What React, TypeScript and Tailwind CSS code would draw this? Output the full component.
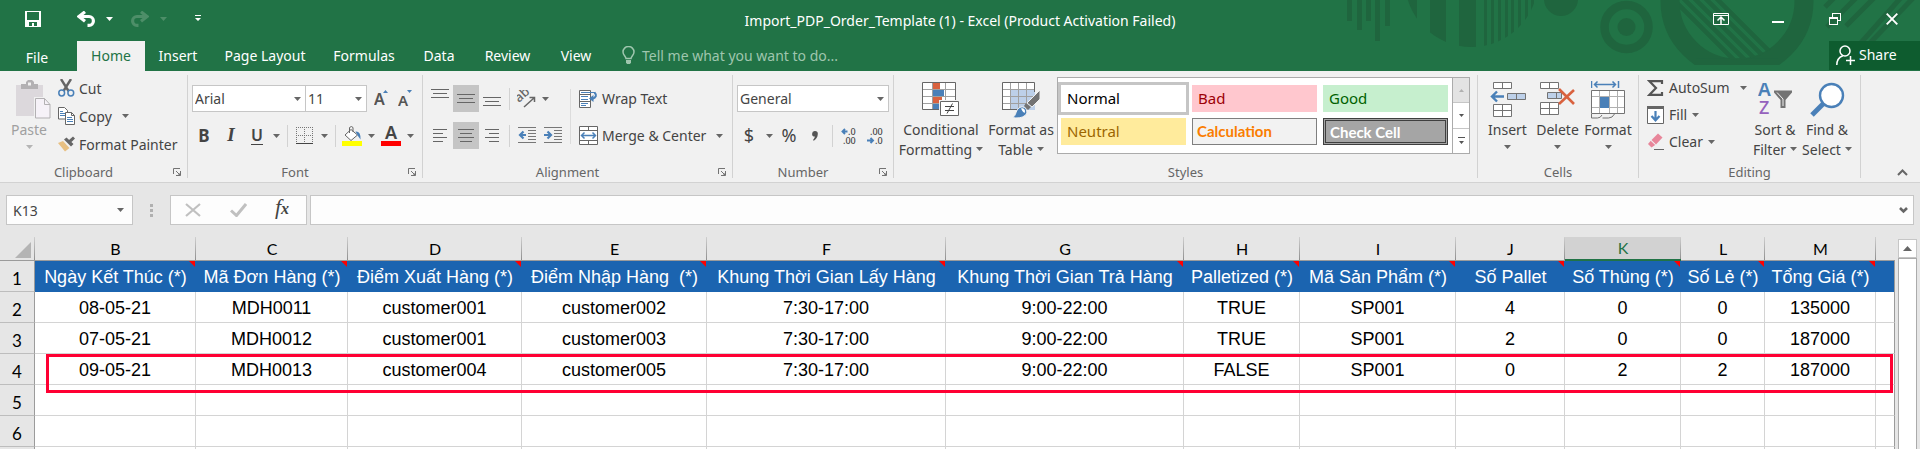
import React from "react";

const UI = "font-['Noto_Sans','Open_Sans',sans-serif]";
const SHEET = "font-['Liberation_Sans',Arial,sans-serif]";
const HEAD = "font-['Lato','Noto_Sans',sans-serif]";

const GRAY = "#737373";
const BLUE = "#4a80b8";

type IconProps = { w: number; h: number; children: React.ReactNode; crisp?: boolean };

function Icon({ w, h, children, crisp }: IconProps) {
  return (
    <svg
      width={w}
      height={h}
      viewBox={`0 0 ${w} ${h}`}
      fill="none"
      aria-hidden="true"
      className="block shrink-0"
      shapeRendering={crisp ? "crispEdges" : undefined}
    >
      {children}
    </svg>
  );
}

function Arrow({ color = "#666666" }: { color?: string }) {
  return (
    <Icon w={7} h={4}>
      <path d="M0 0h7L3.5 4z" fill={color} />
    </Icon>
  );
}

/* ---------- Title bar ---------- */

function Decoration() {
  const bars = [
    [7, 21],
    [17, 30],
    [26, 21],
    [35, 41],
    [45, 26],
  ];
  const stripes = [
    [60, 17],
    [90, 16],
    [119, 17],
    [144, 3],
    [151, 3],
    [158, 3],
    [165, 3],
    [171, 3],
    [178, 3],
    [185, 3],
    [191, 3],
  ];
  return (
    <svg width="580" height="71" viewBox="0 0 580 71" aria-hidden="true" className="pointer-events-none absolute top-0 right-0">
      <defs>
        <clipPath id="disc">
          <circle cx="131.5" cy="-19.5" r="66.5" />
        </clipPath>
        <clipPath id="inner">
          <circle cx="397" cy="2" r="58" />
        </clipPath>
        <clipPath id="base">
          <rect x="300" y="0" width="200" height="65" />
        </clipPath>
      </defs>
      <g fill="#1f653e">
        {bars.map(([x, h]) => (
          <rect key={x} x={x} y="0" width="5" height={h} />
        ))}
        <g clipPath="url(#disc)">
          {stripes.map(([x, w]) => (
            <rect key={x} x={x} y="0" width={w} height="50" />
          ))}
        </g>
        <circle cx="221" cy="-1" r="17" />
        <circle cx="286.5" cy="27" r="9" />
      </g>
      <g stroke="#1f653e" fill="none">
        <circle cx="286.5" cy="27" r="22" strokeWidth="8.5" />
        <g clipPath="url(#base)">
          <circle cx="397" cy="1" r="67" strokeWidth="19" />
          <path d="M356 62h82" strokeWidth="7" />
        </g>
        <g clipPath="url(#inner)" strokeWidth="4.5">
          <path d="M370 -8l80 80M359 -8l80 80M348 -8l80 80M337 -8l80 80M326 -8l80 80" />
        </g>
        <path d="M485 7l10-10M487 27l34-34" strokeWidth="5" />
        <path d="M506 26l32-32M519 45l46-52M528 45l50-52" strokeWidth="5" />
      </g>
    </svg>
  );
}

function QuickAccess() {
  return (
    <div className="flex items-center pb-1 pl-[25px]">
      <button type="button" aria-label="Save">
        <Icon w={16} h={16} crisp>
          <path fillRule="evenodd" d="M0 0h16v16H0zM2 1h12v8H2zM4 11h8v4H9v-3H7v3H4z" fill="#fff" />
        </Icon>
      </button>
      <button type="button" aria-label="Undo" className="ml-9 flex items-center gap-[11px]">
        <Icon w={18} h={16}>
          <path d="M8 .8L2 5.500l6 4.700M2.500 5.500H12a4.300 4.300 0 0 1 0 8.800H10.500" stroke="#fff" strokeWidth="3.200" />
        </Icon>
        <Arrow color="#fff" />
      </button>
      <button type="button" aria-label="Redo" className="ml-[18px] flex items-center gap-[11px]">
        <Icon w={18} h={16}>
          <path d="M10 .8l6 4.700-6 4.700M15.500 5.500H6a4.300 4.300 0 0 0 0 8.800H7.500" stroke="#4d8e68" strokeWidth="3.200" />
        </Icon>
        <Arrow color="#4d8e68" />
      </button>
      <button type="button" aria-label="Customize Quick Access Toolbar" className="ml-7">
        <Icon w={6} h={7}>
          <path d="M0 0h6v1H0zM0 3h6L3 6z" fill="#fff" />
        </Icon>
      </button>
    </div>
  );
}

function WindowControls() {
  const cls = "flex w-[57px] items-center justify-center";
  return (
    <div className="flex items-stretch justify-end pb-1">
      <button type="button" aria-label="Ribbon Display Options" className={cls}>
        <Icon w={16} h={12}>
          <path d="M.5 .5h15v11H.5zM0 2.500h16" stroke="#fff" />
          <path d="M8 11V5M4.500 7.500L8 4l3.500 3.500" stroke="#fff" strokeWidth="1.500" />
        </Icon>
      </button>
      <button type="button" aria-label="Minimize" className={`${cls} pt-1.5`}>
        <span className="h-0.5 w-3 bg-white" />
      </button>
      <button type="button" aria-label="Restore" className={cls}>
        <Icon w={12} h={12} crisp>
          <path d="M.5 4.500h8v7h-8zM3.500 4.500v-4h8v7h-3" stroke="#fff" />
          <path d="M0 5h9" stroke="#fff" />
        </Icon>
      </button>
      <button type="button" aria-label="Close" className={cls}>
        <Icon w={12} h={12}>
          <path d="M.7 .7l10.600 10.600M11.300 .7L.7 11.300" stroke="#fff" strokeWidth="1.900" />
        </Icon>
      </button>
    </div>
  );
}

const tabs: [string, string][] = [
  ["File", "w-[74px] pt-0.5"],
  ["Home", "ml-[3px] w-[68px] bg-[#f1f1f1] pb-0.5 text-[#217346]"],
  ["Insert", "w-[66px] pb-0.5"],
  ["Page Layout", "w-[108px] pb-0.5"],
  ["Formulas", "w-[90px] pb-0.5"],
  ["Data", "w-[60px] pb-0.5"],
  ["Review", "w-[77px] pb-0.5"],
  ["View", "w-[60px] pb-0.5"],
];

function TitleArea() {
  return (
    <header className="relative bg-[#217346] text-[14px] text-white">
      <Decoration />
      <div className="relative grid h-[41px] grid-cols-[1fr_auto_1fr]">
        <QuickAccess />
        <h1 className="self-center">Import_PDP_Order_Template (1) - Excel (Product Activation Failed)</h1>
        <WindowControls />
      </div>
      <div className="relative flex h-[30px]">
        <nav className="flex">
          {tabs.map(([name, look]) => (
            <button key={name} type="button" className={`${look} whitespace-nowrap`}>
              {name}
            </button>
          ))}
        </nav>
        <button type="button" className="ml-4 flex items-center gap-[7px] pb-0.5 text-[#9fc6ae]">
          <Icon w={13} h={18}>
            <path
              d="M4 12.500c0-2-3-3.300-3-6.500a5.500 5.500 0 0 1 11 0c0 3.200-3 4.500-3 6.500z"
              stroke="#9fc6ae"
              strokeWidth="1.500"
            />
            <path d="M4 14h5v2.500L8 18H5l-1-1.500z" fill="#9fc6ae" />
          </Icon>
          Tell me what you want to do...
        </button>
        <button type="button" className="mb-px ml-auto flex w-[91px] items-center gap-1 bg-[#0e5c2f] pb-0.5 pl-[7px]">
          <Icon w={19} h={20}>
            <circle cx="9" cy="6" r="5" stroke="#fff" strokeWidth="1.500" />
            <path d="M.8 20c0-5 2.500-8 6-9.300M14.500 11v9M10 15.500h9" stroke="#fff" strokeWidth="1.500" />
          </Icon>
          Share
        </button>
      </div>
    </header>
  );
}

/* ---------- Ribbon pieces ---------- */

function Launcher({ name }: { name: string }) {
  return (
    <button type="button" aria-label={`${name} settings`} className="mr-1.5">
      <Icon w={8} h={8}>
        <path d="M.5 6V.5H7" stroke={GRAY} />
        <path d="M3 3l3 3M7.500 3v4.500H3" stroke={GRAY} />
        <path d="M7.500 4.500v3h-3z" fill={GRAY} />
      </Icon>
    </button>
  );
}

function Group({
  label,
  width,
  launcher,
  children,
}: {
  label: string;
  width: string;
  launcher?: boolean;
  children: React.ReactNode;
}) {
  return (
    <section aria-label={label} className={`${width} flex flex-col border-r border-[#d2d2d2]`}>
      <div className="flex h-[91px]">{children}</div>
      <div className="flex h-3 items-center text-[13px] leading-3 text-[#666666]">
        <span className="flex-1 text-center">{label}</span>
        {launcher && <span className="w-1.5" />}
        {launcher && <Launcher name={label} />}
      </div>
    </section>
  );
}

function Big({
  icon,
  lines,
  width,
  muted,
}: {
  icon: React.ReactNode;
  lines: string[];
  width: string;
  muted?: boolean;
}) {
  const color = muted ? "#b5b5b5" : "#666666";
  return (
    <button
      type="button"
      className={`${width} flex shrink-0 flex-col items-center whitespace-nowrap text-[14px] leading-5 ${muted ? "text-[#a0a0a0]" : "text-[#444444]"}`}
    >
      <span className="flex h-[45px] items-center pt-1">{icon}</span>
      <span>{lines[0]}</span>
      <span className="flex h-5 items-center gap-1">
        {lines[1]}
        <span className={lines[1] ? "pb-0.5" : "pb-1.5"}>
          <Arrow color={color} />
        </span>
      </span>
    </button>
  );
}

function Sep() {
  return <span className="h-[22px] w-px shrink-0 bg-[#d2d2d2]" />;
}

function Tool({
  label,
  width,
  on,
  children,
}: {
  label: string;
  width: string;
  on?: boolean;
  children: React.ReactNode;
}) {
  return (
    <button
      type="button"
      aria-label={label}
      className={`${width} flex h-[27px] shrink-0 items-center justify-center ${on ? "bg-[#c5c5c5]" : ""}`}
    >
      {children}
    </button>
  );
}

function Picker({ label, value, width }: { label: string; value: string; width: string }) {
  return (
    <div className={`${width} relative h-[27px] border border-[#c6c6c6] bg-white text-[14px] text-[#444444]`}>
      <select aria-label={label} className="h-full w-full appearance-none bg-transparent pl-0.5 outline-none">
        <option>{value}</option>
      </select>
      <span className="pointer-events-none absolute top-[11px] right-1">
        <Arrow />
      </span>
    </div>
  );
}

function Lines({ rows, w, align }: { rows: number[]; w: number; align: "l" | "c" | "r" }) {
  return (
    <Icon w={w} h={rows.length * 4 - 3} crisp>
      {rows.map((r, i) => {
        const x = align === "l" ? 0 : align === "c" ? Math.floor((w - r) / 2) : w - r;
        return <rect key={i} x={x} y={i * 4} width={r} height="1" fill="#666666" />;
      })}
    </Icon>
  );
}

function Clipboard() {
  const row = "flex h-7 items-center gap-1 pb-0.5";
  return (
    <Group label="Clipboard" width="w-[188px]" launcher>
      <Big
        muted
        lines={["Paste", ""]}
        width="w-[58px]"
        icon={
          <span className="pl-2">
            <Icon w={35} h={39}>
              <path d="M0 5h27v31H0z" fill="#dcd8dc" />
              <path d="M5 4h5V2l2-2h4l2 2v2h4v5H5z" fill="#b3b1b3" />
              <path d="M12 2.500h3v3h-3z" fill="#f1f1f1" />
              <path d="M18 17h17v22H18z" fill="#f1f1f1" />
              <path d="M19.500 18.500h9l5.500 6v13.500H19.500z" fill="#f6f2f8" stroke="#b3b1b3" />
              <path d="M28.500 18.500v6H34" stroke="#b3b1b3" />
            </Icon>
          </span>
        }
      />
      <div className="flex flex-col text-[14px] text-[#444444]">
        <button type="button" className={row}>
          <Icon w={17} h={18}>
            <path d="M3 0l7.500 12M13 0L5.500 12" stroke="#666666" strokeWidth="2.400" />
            <circle cx="3.700" cy="14" r="2.900" stroke={BLUE} strokeWidth="1.500" />
            <circle cx="12.800" cy="14" r="2.900" stroke={BLUE} strokeWidth="1.500" />
          </Icon>
          Cut
        </button>
        <button type="button" className={row}>
          <Icon w={17} h={18}>
            <path d="M.5 .5h6l3 3v8.500h-9z" fill="#fff" stroke="#666666" />
            <path d="M2 4.500h3M2 6.500h5M2 8.500h5" stroke={BLUE} />
            <path d="M7.500 5.500h6l3 3v9h-9z" fill="#fff" stroke="#666666" />
            <path d="M13.500 5.500v3h3" stroke="#666666" />
            <path d="M9 10.500h5M9 12.500h6M9 14.500h6" stroke={BLUE} />
          </Icon>
          Copy
          <span className="pl-1.5">
            <Arrow />
          </span>
        </button>
        <button type="button" className={row}>
          <Icon w={17} h={17}>
            <path d="M0 7l5-2 6.500 7L7 15.500z" fill="#e8c082" />
            <path d="M6 3.500l2.500-2 7 6.500-2.500 2.500zM11 4l4-3.500 2 2L13.500 6z" fill="#666666" />
          </Icon>
          Format Painter
        </button>
      </div>
    </Group>
  );
}

function FontGroup() {
  return (
    <Group label="Font" width="w-[235px]" launcher>
      <div className="flex flex-col gap-2.5 pt-2.5 pl-1">
        <div className="flex">
          <Picker label="Font" value="Arial" width="w-[114px]" />
          <Picker label="Font size" value="11" width="w-[61px] border-l-0" />
          <Tool label="Increase Font Size" width="w-[28px]">
            <Icon w={15} h={17}>
              <text x="0" y="15" fontSize="16" fontWeight="600" fill="#555555">
                A
              </text>
              <path d="M9 3l2.500-3L14 3z" fill={BLUE} />
            </Icon>
          </Tool>
          <Tool label="Decrease Font Size" width="w-[20px]">
            <Icon w={15} h={17}>
              <text x="0" y="16" fontSize="15" fontWeight="600" fill="#555555">
                A
              </text>
              <path d="M9 0h5l-2.500 3z" fill={BLUE} />
            </Icon>
          </Tool>
        </div>
        <div className="flex items-center text-[17px] text-[#444444]">
          <Tool label="Bold" width="w-[24px]">
            <b>B</b>
          </Tool>
          <Tool label="Italic" width="w-[30px]">
            <b className="font-['Liberation_Serif',serif] text-[19px] italic">I</b>
          </Tool>
          <Tool label="Underline" width="w-[22px]">
            <span className="border-b border-[#444444] text-[16px] leading-[17px] font-semibold">U</span>
          </Tool>
          <Tool label="Underline options" width="w-[16px]">
            <Arrow />
          </Tool>
          <span className="w-[3px]" />
          <Sep />
          <Tool label="Borders" width="w-[33px]">
            <Icon w={17} h={17} crisp>
              <path d="M0 .5h17M0 8.500h17M.5 0v17M8.500 0v17M16.500 0v17" stroke="#777777" strokeDasharray="1 1" />
              <path d="M0 16.500h17" stroke="#444444" />
            </Icon>
          </Tool>
          <Tool label="Border options" width="w-[6px]">
            <Arrow />
          </Tool>
          <span className="w-[8px]" />
          <Sep />
          <Tool label="Fill Color" width="w-[32px]">
            <Icon w={20} h={20}>
              <path d="M9 3.500l6.500 5.500-6.500 5.500L3 9z" fill="#fff" stroke="#666666" />
              <path d="M7.500 7V1.500Q9.500-.5 11 1.500V6" stroke="#666666" />
              <path d="M13.500 5.500Q19 5 18.500 13.500L16 10z" fill={BLUE} />
              <rect y="15" width="20" height="5" fill="#ffff00" />
            </Icon>
          </Tool>
          <Tool label="Fill options" width="w-[7px]">
            <Arrow />
          </Tool>
          <Tool label="Font Color" width="w-[32px]">
            <Icon w={20} h={20}>
              <text x="4" y="13" fontSize="18" fontWeight="600" fill="#444444">
                A
              </text>
              <rect y="15" width="20" height="5" fill="#ff0000" />
            </Icon>
          </Tool>
          <Tool label="Font color options" width="w-[7px]">
            <Arrow />
          </Tool>
        </div>
      </div>
    </Group>
  );
}

function Indent({ out }: { out?: boolean }) {
  return (
    <Icon w={18} h={17}>
      <path d="M0 .5h18M10 3.500h8M10 6.500h8M10 9.500h8M10 12.500h8M0 15.500h18" stroke="#777777" />
      {out ? (
        <path d="M8 8H2.500M5.500 4.500L2 8l3.500 3.500" stroke={BLUE} strokeWidth="2.200" />
      ) : (
        <path d="M0 8h6M3.500 4.500L7 8l-3.500 3.500" stroke={BLUE} strokeWidth="2.200" />
      )}
    </Icon>
  );
}

function AlignmentGroup() {
  const btn = "flex h-[27px] items-center gap-1 whitespace-nowrap";
  return (
    <Group label="Alignment" width="w-[310px]" launcher>
      <div className="flex flex-col gap-2.5 pt-2.5 pl-1">
        <div className="flex items-center">
          <Tool label="Top Align" width="w-[26px] pb-2.5">
            <Lines w={18} rows={[18, 14, 18]} align="c" />
          </Tool>
          <Tool label="Middle Align" width="w-[26px]" on>
            <Lines w={18} rows={[18, 14, 18]} align="c" />
          </Tool>
          <Tool label="Bottom Align" width="w-[26px] pt-1.5">
            <Lines w={18} rows={[18, 14, 18]} align="c" />
          </Tool>
          <span className="w-1" />
          <Sep />
          <Tool label="Orientation" width="w-[32px]">
            <Icon w={19} h={18}>
              <text x="0" y="10" fontSize="13" fontWeight="500" fill="#666666" transform="rotate(-42 5 9)">
                ab
              </text>
              <path d="M7 17L17 8M12.500 7.500H17.500V12" stroke="#666666" strokeWidth="1.500" />
            </Icon>
          </Tool>
          <Tool label="Orientation options" width="w-[6px]">
            <Arrow />
          </Tool>
        </div>
        <div className="flex items-center">
          <Tool label="Align Left" width="w-[26px]">
            <Lines w={14} rows={[14, 10, 14, 10]} align="l" />
          </Tool>
          <Tool label="Center" width="w-[26px]" on>
            <Lines w={16} rows={[16, 12, 16, 12]} align="c" />
          </Tool>
          <Tool label="Align Right" width="w-[26px]">
            <Lines w={14} rows={[14, 10, 14, 10]} align="r" />
          </Tool>
          <span className="w-1" />
          <Sep />
          <Tool label="Decrease Indent" width="w-[34px]">
            <Indent out />
          </Tool>
          <Tool label="Increase Indent" width="w-[18px]">
            <Indent />
          </Tool>
        </div>
      </div>
      <div className="mt-3.5 ml-2 h-[55px] w-px bg-[#dcdcdc]" />
      <div className="flex flex-col gap-2.5 pt-2.5 pl-2 text-[14px] text-[#444444]">
        <button type="button" className={btn}>
          <Icon w={19} h={18}>
            <path d="M.5 .5h11v17H.5zM0 4.500h12M0 11.500h12" fill="#fff" stroke="#666666" />
            <path d="M2 2.500h14M2 6.500h7M2 9.500h7M2 13.500h7M2 15.500h5" stroke={BLUE} />
            <path d="M15.500 2.500Q19.500 6.500 13 9" stroke={BLUE} strokeWidth="2" />
            <path d="M14.500 5v7L10 8.500z" fill={BLUE} />
          </Icon>
          Wrap Text
        </button>
        <button type="button" className={btn}>
          <Icon w={19} h={19}>
            <path d="M.5 .5h18v18H.5zM0 4.500h19M0 14.500h19M9.500 0v4.500M9.500 14.500V19" fill="#fff" stroke="#666666" />
            <path d="M3 9.500h13M5.500 6.500l-3 3 3 3M13.500 6.500l3 3-3 3" stroke={BLUE} strokeWidth="1.500" />
          </Icon>
          Merge &amp; Center
          <span className="pl-1.5">
            <Arrow />
          </span>
        </button>
      </div>
    </Group>
  );
}

function Decimal({ up }: { up?: boolean }) {
  return (
    <Icon w={18} h={18}>
      <text x={up ? 7 : 3} y="8" fontSize="9" fontWeight="500" fill="#444444">
        {up ? ".0" : ".00"}
      </text>
      <text x={up ? 2 : 8} y="17" fontSize="9" fontWeight="500" fill="#444444">
        {up ? ".00" : ".0"}
      </text>
      {up ? (
        <path d="M6.500 4.500H1.500M4 2L1.500 4.500 4 7" stroke={BLUE} strokeWidth="1.900" />
      ) : (
        <path d="M0 13.500h5.500M3.500 11L6 13.500 3.500 16" stroke={BLUE} strokeWidth="1.900" />
      )}
    </Icon>
  );
}

function NumberGroup() {
  return (
    <Group label="Number" width="w-[161px]" launcher>
      <div className="flex flex-col gap-2.5 pt-2.5 pl-1">
        <Picker label="Number Format" value="General" width="w-[152px]" />
        <div className="flex items-center text-[18px] text-[#444444]">
          <Tool label="Accounting Number Format" width="w-[24px]">
            $
          </Tool>
          <Tool label="Currency options" width="w-[16px]">
            <Arrow />
          </Tool>
          <Tool label="Percent Style" width="w-[24px]">
            %
          </Tool>
          <Tool label="Comma Style" width="w-[28px]">
            <Icon w={6} h={10}>
              <path d="M3 0a2.800 2.800 0 0 1 2.800 3c0 3.200-1.800 5.200-4 6.700l-.8-.8C2.300 7.600 2.800 6.600 2.800 5.600a2.800 2.800 0 0 1 .2-5.600z" fill="#555555" />
            </Icon>
          </Tool>
          <span className="w-[3px]" />
          <Sep />
          <Tool label="Increase Decimal" width="w-[34px]">
            <Decimal up />
          </Tool>
          <Tool label="Decrease Decimal" width="w-[18px]">
            <Decimal />
          </Tool>
        </div>
      </div>
    </Group>
  );
}

function StylesGroup() {
  const cell = "h-[27px] px-1.5 text-left text-[15px] whitespace-nowrap";
  return (
    <Group label="Styles" width="min-w-0 flex-1">
      <Big
        lines={["Conditional", "Formatting"]}
        width="ml-1 w-[86px]"
        icon={
          <Icon w={38} h={36}>
            <path d="M.5 .5h33v27H.5z" fill="#fff" />
            <path d="M11 1h7v6h-7zM11 15h9v6h-9z" fill="#d9623f" />
            <path d="M11 8h11v6H11zM11 22h6v5h-6z" fill={BLUE} />
            <path d="M0 7.500h34M0 14.500h34M0 21.500h34M10.500 0v28M23.500 0v28" stroke="#a0a0a0" />
            <path d="M.5 .5h33v27H.5z" stroke="#666666" />
            <path d="M17 18h21v18H17z" fill="#f1f1f1" />
            <path d="M18.500 19.500h18v14h-18z" fill="#fff" stroke="#666666" />
            <path d="M23 24.500h9M23 28.500h9M30.500 21.500l-5.500 10" stroke="#444444" />
          </Icon>
        }
      />
      <Big
        lines={["Format as", "Table"]}
        width="ml-1 w-[66px]"
        icon={
          <Icon w={38} h={36}>
            <path d="M.5 .5h32v27H.5z" fill="#fff" />
            <path d="M9 8h24v20H9z" fill="#bdd0e9" />
            <path d="M0 7.500h33M0 14.500h33M0 21.500h33M8.500 0v28M16.500 0v28M24.500 0v28" stroke="#a0a0a0" />
            <path d="M.5 28V.5h32V10M0 27.500h16" stroke="#666666" />
            <path d="M38 8v9l-8 8-5-4z" fill={GRAY} stroke="#f1f1f1" />
            <path d="M24 21l5 4-3 3-4-4z" fill={GRAY} />
            <path d="M10 35.500c5-1 3-9 9-10.500 5-1 8 5 4 8.500-3 2.500-8 3-13 2z" fill={BLUE} stroke="#f1f1f1" />
            <path d="M19 26.500c3-1 5 2 3.500 4.500-2-1-2.500-3-3.500-4.500z" fill="#fff" />
          </Icon>
        }
      />
      <div className="mt-0.5 mr-[7px] ml-[3px] flex h-[77px] min-w-0 flex-1 border border-[#ababab] bg-white">
        <div className="grid flex-1 grid-cols-3 content-start gap-x-1.5 gap-y-1.5 py-[7px] pr-1 pl-[3px]">
          <button type="button" className={`${cell} bg-white text-black outline-3 outline-[#c5c5c5]`}>
            Normal
          </button>
          <button type="button" className={`${cell} bg-[#ffc7ce] text-[#9c0006]`}>
            Bad
          </button>
          <button type="button" className={`${cell} bg-[#c6efce] text-[#006100]`}>
            Good
          </button>
          <button type="button" className={`${cell} bg-[#ffeb9c] text-[#9c6500]`}>
            Neutral
          </button>
          <button type="button" className={`${cell} border border-[#7f7f7f] bg-[#f2f2f2] pl-1 ${HEAD} font-bold text-[#fa7d00]`}>
            Calculation
          </button>
          <button
            type="button"
            className={`${cell} border-3 border-double border-[#3f3f3f] bg-[#a5a5a5] pl-1 leading-5 ${HEAD} font-bold text-white`}
          >
            Check Cell
          </button>
        </div>
        <div className="flex w-[17px] flex-col border-l border-[#ababab]">
          <button type="button" aria-label="Previous styles" className="flex flex-1 items-center justify-center bg-[#e3e3e3]">
            <Icon w={5} h={3}>
              <path d="M0 3h5L2.500 0z" fill="#b0b0b0" />
            </Icon>
          </button>
          <button type="button" aria-label="Next styles" className="flex flex-1 items-center justify-center border-y border-[#c6c6c6]">
            <Icon w={5} h={3}>
              <path d="M0 0h5L2.500 3z" fill="#555555" />
            </Icon>
          </button>
          <button type="button" aria-label="More styles" className="flex flex-1 items-center justify-center">
            <Icon w={7} h={7}>
              <path d="M0 0h7v1H0zM1 4h5L3.500 7z" fill="#555555" />
            </Icon>
          </button>
        </div>
      </div>
    </Group>
  );
}

function CellsGroup() {
  return (
    <Group label="Cells" width="w-[161px]">
      <Big
        lines={["Insert", ""]}
        width="ml-1 w-[51px]"
        icon={
          <Icon w={36} h={36}>
            <path d="M3.500 .5h18v6h-18zM12.500 .5v6M3.500 22.500h18v12h-18zM3.500 28.500h18M12.500 22.500v12" fill="#fff" stroke={GRAY} />
            <path d="M17.500 11.500h18v6h-18zM26.500 11.500v6" fill="#bdd0e9" stroke={GRAY} />
            <path d="M14 14.500H2M7 9.500l-5 5 5 5" stroke={BLUE} strokeWidth="2.400" />
          </Icon>
        }
      />
      <Big
        lines={["Delete", ""]}
        width="w-[49px]"
        icon={
          <Icon w={35} h={36}>
            <path d="M.5 .5h18v6H.5zM9.500 .5v6M.5 20.500h18v12H.5zM.5 26.500h18M9.500 20.500v12" fill="#fff" stroke={GRAY} />
            <path d="M7.500 10.500h14v6h-14zM16.500 10.500v6" fill="#bdd0e9" stroke={GRAY} />
            <path d="M19 7l15 15M34 8L19 22" stroke="#d9623f" strokeWidth="2.600" />
          </Icon>
        }
      />
      <Big
        lines={["Format", ""]}
        width="w-[52px]"
        icon={
          <Icon w={34} h={38}>
            <path d="M.5 0v7M27.500 0v7M3 3.500h22M6.500 .5l-3 3 3 3M21.500 .5l3 3-3 3" stroke={BLUE} strokeWidth="1.500" />
            <path d="M.5 9.500h33v23H.5z" fill="#fff" />
            <path d="M8.500 9v24M18.500 9v24M26.500 9v24M0 15.500h34M0 26.500h34" stroke="#b0b0b0" />
            <path d="M.5 9.500h33v23H.5z" stroke={GRAY} />
            <path d="M9 16h9v11H9z" fill={BLUE} />
            <path d="M.5 33v4h6q3 0 4.500-3M11.500 37h6q4 0 6-4" stroke={GRAY} />
          </Icon>
        }
      />
    </Group>
  );
}

function EditingGroup() {
  const row = "flex h-[27px] items-center gap-[5px] pb-0.5";
  return (
    <Group label="Editing" width="w-[222px]">
      <div className="flex w-[108px] flex-col pl-2 text-[14px] text-[#444444]">
        <button type="button" className={row}>
          <Icon w={17} h={16}>
            <path d="M15 4V1.200H2.500L9 8l-6.500 6.800H15V12" stroke="#555555" strokeWidth="2.200" />
          </Icon>
          AutoSum
          <span className="pl-[5px]">
            <Arrow />
          </span>
        </button>
        <button type="button" className={row}>
          <Icon w={17} h={18}>
            <path d="M.5 .5h16v17H.5z" fill="#fff" stroke="#666666" />
            <path d="M0 0h17v3H0z" fill="#666666" />
            <path d="M8.500 5v9M4.500 10l4 4.300 4-4.300" stroke={BLUE} strokeWidth="2.200" />
          </Icon>
          Fill
          <Arrow />
        </button>
        <button type="button" className={row}>
          <Icon w={17} h={17}>
            <path d="M4.500 7L11 .5l4.500 4L9 11.500z" fill="#e8869a" />
            <path d="M3.700 7.800L1 11l3.500 3.500L8.200 12z" fill="#e8869a" />
            <path d="M7 16.500h10" stroke="#666666" />
          </Icon>
          Clear
          <Arrow />
        </button>
      </div>
      <Big
        lines={["Sort &", "Filter"]}
        width="ml-1 w-[48px]"
        icon={
          <Icon w={35} h={34}>
            <text x="0" y="13" fontSize="19" fontWeight="600" fill={BLUE}>
              A
            </text>
            <text x="1" y="31" fontSize="18" fontWeight="500" fill="#9562bd">
              Z
            </text>
            <path d="M16 7.500h18v2L27.500 17v8h-5v-8L16 9.500z" fill={GRAY} />
            <path d="M19 9.500l6 6.500v7" stroke="#f1f1f1" />
          </Icon>
        }
      />
      <Big
        lines={["Find &", "Select"]}
        width="w-[56px]"
        icon={
          <Icon w={35} h={36}>
            <path d="M13 22L2 33" stroke={BLUE} strokeWidth="5" />
            <circle cx="21.500" cy="13.500" r="11.500" fill="#fff" stroke={BLUE} strokeWidth="2.400" />
          </Icon>
        }
      />
    </Group>
  );
}

function Ribbon() {
  return (
    <div className="flex border-b border-[#d2d2d2] bg-[#f1f1f1] py-1">
      <Clipboard />
      <FontGroup />
      <AlignmentGroup />
      <NumberGroup />
      <StylesGroup />
      <CellsGroup />
      <EditingGroup />
      <div className="flex w-[59px] items-end justify-end pr-3 pb-0.5">
        <button type="button" aria-label="Collapse the Ribbon">
          <Icon w={11} h={8}>
            <path d="M1 7l4.500-4.500L10 7" stroke="#666666" strokeWidth="2" />
          </Icon>
        </button>
      </div>
    </div>
  );
}

/* ---------- Formula bar ---------- */

function FormulaBar() {
  const box = "flex h-[30px] items-center border border-[#c6c6c6] bg-[#fdfdfd]";
  return (
    <div className="flex items-center bg-[#e6e6e6] pt-3 pr-1.5 pb-3 pl-1.5">
      <div className={`${box} w-[127px] pr-2`}>
        <input
          aria-label="Name Box"
          defaultValue="K13"
          className="min-w-0 flex-1 bg-transparent pl-1.5 text-[14px] text-[#444444] outline-none"
        />
        <Arrow />
      </div>
      <span className="flex w-[37px] flex-col items-center gap-0.5">
        <span className="size-[3px] bg-[#b0b0b0]" />
        <span className="size-[3px] bg-[#b0b0b0]" />
        <span className="size-[3px] bg-[#b0b0b0]" />
      </span>
      <div className={`${box} w-[137px]`}>
        <button type="button" aria-label="Cancel" className="flex w-[44px] justify-center">
          <Icon w={16} h={14}>
            <path d="M1 1l14 12M15 1L1 13" stroke="#c0c0c0" strokeWidth="2.200" />
          </Icon>
        </button>
        <button type="button" aria-label="Enter" className="flex w-[46px] justify-center">
          <Icon w={17} h={14}>
            <path d="M1 7.500l5.500 5L16 1" stroke="#c0c0c0" strokeWidth="3" />
          </Icon>
        </button>
        <button
          type="button"
          aria-label="Insert Function"
          className="w-[42px] pb-1 font-['Liberation_Serif',serif] text-[22px] leading-6 text-[#444444] italic"
        >
          f<span className="text-[16px] font-bold">x</span>
        </button>
      </div>
      <div className={`${box} ml-[3px] flex-1 pr-[5px]`}>
        <input aria-label="Formula" className="min-w-0 flex-1 bg-transparent px-1 text-[14px] outline-none" />
        <Icon w={9} h={7}>
          <path d="M1 1l3.500 3.500L8 1" stroke="#666666" strokeWidth="2.600" />
        </Icon>
      </div>
    </div>
  );
}

/* ---------- Worksheet ---------- */

const columns: [string, string, string][] = [
  ["B", "Ngày Kết Thúc (*)", "w-[161px]"],
  ["C", "Mã Đơn Hàng (*)", "w-[152px]"],
  ["D", "Điểm Xuất Hàng (*)", "w-[174px]"],
  ["E", "Điểm Nhập Hàng  (*)", "w-[185px]"],
  ["F", "Khung Thời Gian Lấy Hàng", "w-[239px]"],
  ["G", "Khung Thời Gian Trả Hàng", "w-[238px]"],
  ["H", "Palletized (*)", "w-[116px]"],
  ["I", "Mã Sản Phẩm (*)", "w-[156px]"],
  ["J", "Số Pallet", "w-[109px]"],
  ["K", "Số Thùng (*)", "w-[116px]"],
  ["L", "Số Lẻ (*)", "w-[84px]"],
  ["M", "Tổng Giá (*)", "w-[111px]"],
];

const orders: string[][] = [
  ["08-05-21", "MDH0011", "customer001", "customer002", "7:30-17:00", "9:00-22:00", "TRUE", "SP001", "4", "0", "0", "135000"],
  ["07-05-21", "MDH0012", "customer001", "customer003", "7:30-17:00", "9:00-22:00", "TRUE", "SP001", "2", "0", "0", "187000"],
  ["09-05-21", "MDH0013", "customer004", "customer005", "7:30-17:00", "9:00-22:00", "FALSE", "SP001", "0", "2", "2", "187000"],
  [],
  [],
];

function RowHead({ n }: { n?: number }) {
  return (
    <th
      scope="row"
      className={`border-r border-b border-r-[#9b9b9b] border-b-[#bdbdbd] bg-[#e6e6e6] p-0 pt-1.5 text-center text-[17px] leading-6 font-normal text-black ${HEAD}`}
    >
      {n}
    </th>
  );
}

const edge =
  "bg-[linear-gradient(to_bottom,#cfcfcf,#8f8f8f)] bg-[length:1px_100%] bg-right bg-no-repeat";

function Worksheet() {
  return (
    <div className="relative flex min-h-0 flex-1 overflow-hidden bg-[#e6e6e6]">
      <table className={`min-w-0 flex-1 table-fixed border-separate border-spacing-0 self-start ${SHEET} text-[18px] text-black`}>
        <colgroup>
          <col className="w-[35px]" />
          {columns.map(([id, , w]) => (
            <col key={id} className={w} />
          ))}
          <col />
        </colgroup>
        <thead>
          <tr className={`h-6 text-[16px] leading-5 ${HEAD}`}>
            <th className={`border-b border-[#9b9b9b] p-0 ${edge}`}>
              <span className="flex justify-end pt-0.5 pr-1">
                <Icon w={16} h={16}>
                  <path d="M16 0v16H0z" fill="#b4b4b4" />
                </Icon>
              </span>
            </th>
            {columns.map(([id]) => (
              <th
                key={id}
                scope="col"
                className={`p-0 font-normal ${edge} ${
                  id === "K" ? "border-b-2 border-[#217346] bg-[#d2d2d2] text-[#217346]" : "border-b border-[#9b9b9b]"
                }`}
              >
                {id}
              </th>
            ))}
            <th className="border-b border-[#9b9b9b] p-0" />
          </tr>
        </thead>
        <tbody>
          <tr className="h-[31px]">
            <RowHead n={1} />
            {columns.map(([id, title]) => (
              <td key={id} className="relative bg-[#1b64b0] p-0 text-center leading-6 whitespace-pre text-white">
                {title}
                <span className="absolute top-0 right-px size-1.5 bg-[#ff0000] [clip-path:polygon(0_0,100%_0,100%_100%)]" />
              </td>
            ))}
            <td className="border-r border-[#9b9b9b] bg-[#1b64b0] p-0" />
          </tr>
          {orders.map((cells, r) => (
            <tr key={r} className="h-[31px]">
              <RowHead n={r + 2} />
              {columns.map(([id], c) => (
                <td key={id} className="border-r border-b border-[#d4d4d4] bg-white p-0 pt-0.5 text-center leading-6">
                  {cells[c]}
                </td>
              ))}
              <td className="border-r border-b border-r-[#9b9b9b] border-b-[#d4d4d4] bg-white p-0" />
            </tr>
          ))}
          <tr className="h-[31px]">
            <RowHead />
            {columns.map(([id]) => (
              <td key={id} className="border-r border-b border-[#d4d4d4] bg-white p-0" />
            ))}
            <td className="border-r border-[#9b9b9b] bg-white p-0" />
          </tr>
        </tbody>
      </table>
      <div className="flex w-[25px] shrink-0 flex-col items-start pt-0.5 pl-[3px]">
        <button
          type="button"
          aria-label="Scroll up"
          className="flex h-[19px] w-[19px] items-center justify-center border border-[#c6c6c6] bg-white"
        >
          <Icon w={9} h={5}>
            <path d="M0 5h9L4.500 0z" fill="#666666" />
          </Icon>
        </button>
        <div className="w-[19px] flex-1 border border-b-0 border-[#ababab] bg-white" />
      </div>
      <div className="pointer-events-none absolute top-[117px] right-[27px] left-[46px] h-[39px] border-3 border-[#ff0033]" />
    </div>
  );
}

export default function App() {
  return (
    <div className={`flex h-screen min-w-[1500px] flex-col overflow-hidden ${UI}`}>
      <TitleArea />
      <Ribbon />
      <FormulaBar />
      <Worksheet />
    </div>
  );
}
